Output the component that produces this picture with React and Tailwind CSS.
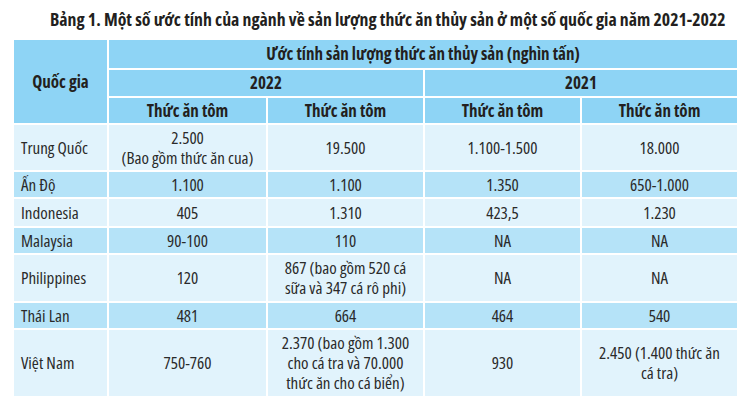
const rows = [
  { name: "Trung Quốc", cells: ["2.500\n(Bao gồm thức ăn cua)", "19.500", "1.100-1.500", "18.000"], h: "h-[47px]", dark: false },
  { name: "Ấn Độ", cells: ["1.100", "1.100", "1.350", "650-1.000"], h: "h-[27px]", dark: true },
  { name: "Indonesia", cells: ["405", "1.310", "423,5", "1.230"], h: "h-[29px]", dark: false },
  { name: "Malaysia", cells: ["90-100", "110", "NA", "NA"], h: "h-[27px]", dark: true },
  { name: "Philippines", cells: ["120", "867 (bao gồm 520 cá\nsữa và 347 cá rô phi)", "NA", "NA"], h: "h-[48px]", dark: false },
  { name: "Thái Lan", cells: ["481", "664", "464", "540"], h: "h-[27px]", dark: true },
  { name: "Việt Nam", cells: ["750-760", "2.370 (bao gồm 1.300\ncho cá tra và 70.000\nthức ăn cho cá biển)", "930", "2.450 (1.400 thức ăn\ncá tra)"], h: "h-[68px]", dark: false },
];

export default function App() {
  return (
    <div className="w-[752px] h-[412px] bg-white text-[#231f20] font-['Open_Sans',sans-serif] font-stretch-condensed">
      <div className="h-[40px] pt-[8px] pl-[50px] text-[17.8px] font-bold leading-[22px] whitespace-nowrap">
        Bảng 1. Một số ước tính của ngành về sản lượng thức ăn thủy sản ở một số quốc gia năm 2021-2022
      </div>
      <table className="ml-[14px] w-[723px] table-fixed border-collapse text-[17px] leading-[20px]">
        <colgroup>
          <col className="w-[94px]" />
          <col className="w-[159px]" />
          <col className="w-[157px]" />
          <col className="w-[157px]" />
          <col className="w-[156px]" />
        </colgroup>
        <thead className="bg-[#8ed4f5]">
          <tr className="h-[29px]">
            <th rowSpan={3} className="border-2 border-t-0 border-l-0 border-white font-bold">Quốc gia</th>
            <th colSpan={4} className="border-2 border-t-0 border-r-0 border-white font-bold">
              Ước tính sản lượng thức ăn thủy sản (nghìn tấn)
            </th>
          </tr>
          <tr className="h-[28px]">
            <th colSpan={2} className="border-2 border-white font-bold">2022</th>
            <th colSpan={2} className="border-2 border-r-0 border-white font-bold">2021</th>
          </tr>
          <tr className="h-[27px]">
            <th className="border-2 border-white font-bold">Thức ăn tôm</th>
            <th className="border-2 border-white font-bold">Thức ăn tôm</th>
            <th className="border-2 border-white font-bold">Thức ăn tôm</th>
            <th className="border-2 border-r-0 border-white font-bold">Thức ăn tôm</th>
          </tr>
        </thead>
        <tbody className="text-[#2a2a2a]">
          {rows.map((r) => (
            <tr key={r.name} className={r.h + " " + (r.dark ? "bg-[#b5e3f8]" : "bg-[#e1f3fc]")}>
              <td className="border-2 border-l-0 border-white pl-[7px]">{r.name}</td>
              {r.cells.map((c, i) => (
                <td key={i} className={"border-2 border-white text-center whitespace-pre-line " + (i === 3 ? "border-r-0" : "")}>
                  {c}
                </td>
              ))}
            </tr>
          ))}
        </tbody>
      </table>
    </div>
  );
}
